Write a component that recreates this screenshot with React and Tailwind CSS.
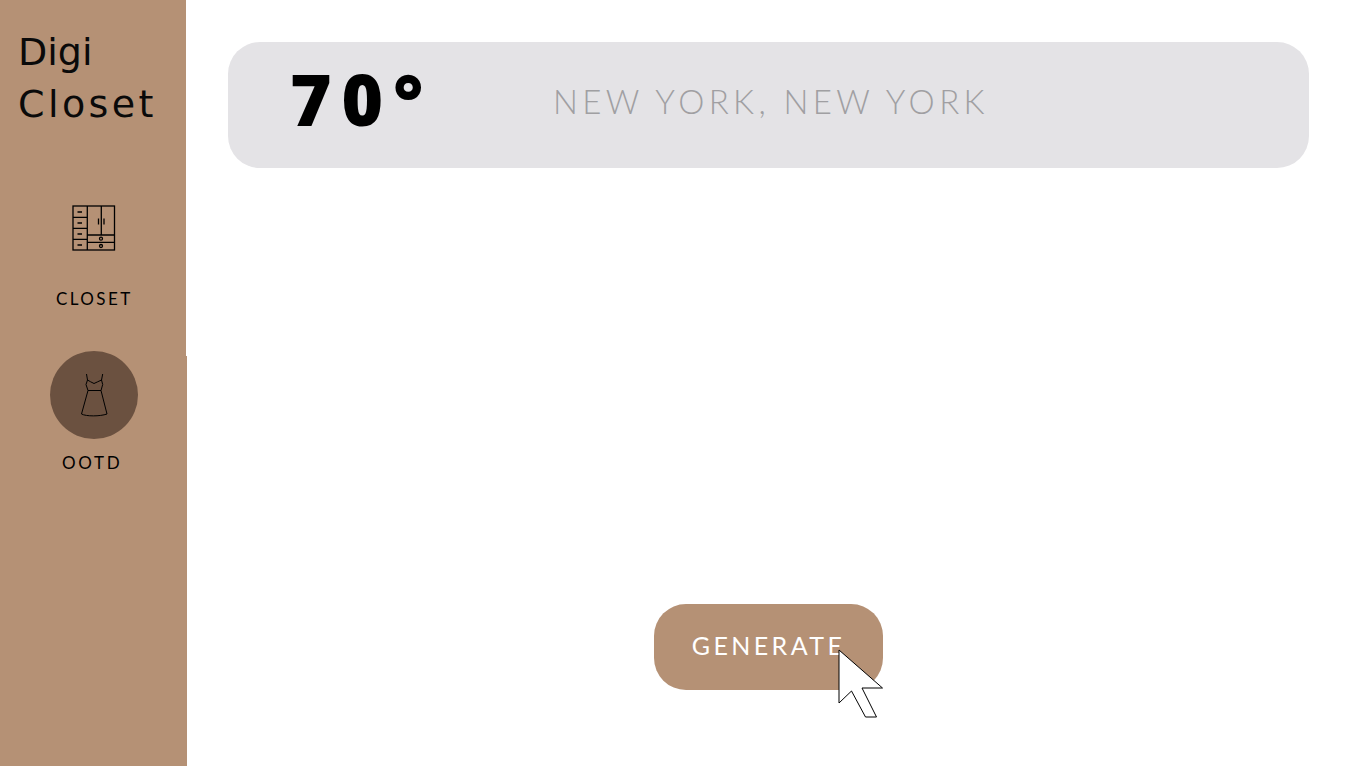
import { useState } from "react";

function ClosetIcon() {
  return (
    <svg width="44" height="47" viewBox="0 0 44 47" fill="none" stroke="#000" strokeWidth="1.3">
      <rect x="1" y="1" width="41.5" height="44" />
      <path d="M15.3 1V45M29.3 1V30M15.3 12.3H1M15.3 23.3H1M15.3 34.3H1M15.3 30H42.5M15.3 37.3H42.5" />
      <path d="M5.5 7H10M5.5 18H10M5.5 29H10M5.5 40H10" strokeWidth="1.6" />
      <path d="M26.5 13.5V19.5M32 13.5V19.5" />
      <circle cx="29" cy="33.7" r="1.5" />
      <circle cx="29" cy="41" r="1.5" />
    </svg>
  );
}

function DressIcon() {
  return (
    <svg width="28" height="46" viewBox="0 0 28 46" fill="none" stroke="#000" strokeWidth="1">
      <path d="M6.5 1L7.5 7L6 11.5L8 17.5L1.5 41C6 43.5 20 43.5 27 41L21 17.5L22.7 11.5L21.5 7L22.7 1" />
      <path d="M7.5 7C9.5 8 11.5 9.5 14 10.5C16.5 9.5 19 8 21.5 7M8 17.5H21" />
    </svg>
  );
}

function Cursor() {
  return (
    <svg className="absolute left-[184px] top-[45px]" width="46" height="69" viewBox="0 0 46 69">
      <path d="M1 1L44.5 39H24L38.5 68H27.5L13.5 42L1 54Z" fill="#fff" stroke="#000" strokeWidth="1" />
    </svg>
  );
}

export default function App() {
  const [city] = useState("NEW YORK, NEW YORK");

  return (
    <div className="flex h-[768px] w-[1366px] overflow-hidden bg-white font-['Lato',sans-serif]">
      <aside className="flex h-[766px] w-[187px] shrink-0 flex-col">
        <div className="flex h-[356px] w-[186px] flex-col bg-[#b59175]">
          <h1 className="flex flex-col pl-[18px] pt-[26px] font-['DejaVu_Sans',cursive] text-[38px] leading-[52px] text-[#0a0a0a]">
            <span className="tracking-[0px]">Digi</span>
            <span className="tracking-[3.4px]">Closet</span>
          </h1>
          <div className="ml-[72px] mt-[75px]">
            <ClosetIcon />
          </div>
          <span className="ml-[56px] mt-[35px] text-[17px] leading-[24px] tracking-[2.4px] text-black">CLOSET</span>
        </div>
        <div className="flex flex-1 flex-col bg-[#b59175]">
          <div className="ml-[50px] flex h-[88px] w-[88px] -translate-y-[5px] items-center justify-center rounded-full bg-[#6b5140] pt-[2px]">
            <DressIcon />
          </div>
          <span className="ml-[62px] mt-[7px] text-[17px] leading-[24px] tracking-[2.7px] text-black">OOTD</span>
        </div>
      </aside>

      <main className="flex flex-1 flex-col items-start pl-[41px] pt-[42px]">
        <section className="flex h-[126px] w-[1081px] items-center rounded-[32px] bg-[#e4e3e6] pl-[62px]">
          <span className="w-[263px] -translate-y-[7px] font-['Open_Sans',sans-serif] text-[71px] font-extrabold leading-none tracking-[10px] text-black">
            70°
          </span>
          <span className="-translate-y-[3px] text-[33px] font-light tracking-[4.4px] text-[#a09fa2]">{city}</span>
        </section>

        <div className="relative ml-[426px] mt-[436px]">
          <button className="flex h-[86px] w-[229px] items-center justify-center rounded-[32px] bg-[#b59175] pb-[3px] text-[25px] tracking-[3.4px] text-white">
            GENERATE
          </button>
          <Cursor />
        </div>
      </main>
    </div>
  );
}
